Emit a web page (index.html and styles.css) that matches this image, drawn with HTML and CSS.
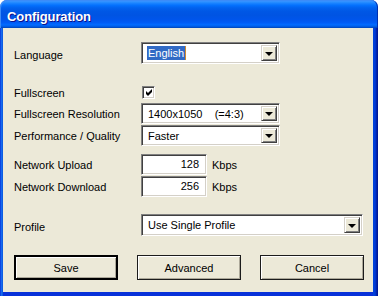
FILE: index.html
```html
<!DOCTYPE html>
<html>
<head>
<meta charset="utf-8">
<link rel="stylesheet" href="styles.css">
</head>
<body>
<div class="window">
  <div class="titlebar"><span class="title">Configuration</span></div>
  <div class="client">
    <div class="row r-lang">
      <span class="label">Language</span>
      <div class="combo w139"><span class="val"><span class="sel">English</span><span class="caret"></span></span><span class="drop"><i></i></span></div>
    </div>
    <div class="row r-full">
      <span class="label">Fullscreen</span>
      <span class="check"><svg width="7" height="7" viewBox="0 0 7 7"><path d="M0 2 L2 4 L6 0 L6 3 L2 7 L0 5 Z" fill="#000"/></svg></span>
    </div>
    <div class="row r-res">
      <span class="label">Fullscreen Resolution</span>
      <div class="combo w139"><span class="val">1400x1050    (=4:3)</span><span class="drop"><i></i></span></div>
    </div>
    <div class="row r-perf">
      <span class="label">Performance / Quality</span>
      <div class="combo w139"><span class="val">Faster</span><span class="drop"><i></i></span></div>
    </div>
    <div class="row r-up">
      <span class="label">Network Upload</span>
      <span class="num">128</span><span class="unit">Kbps</span>
    </div>
    <div class="row r-down">
      <span class="label">Network Download</span>
      <span class="num">256</span><span class="unit">Kbps</span>
    </div>
    <div class="row r-prof">
      <span class="label">Profile</span>
      <div class="combo w222"><span class="val">Use Single Profile</span><span class="drop"><i></i></span></div>
    </div>
    <div class="buttons">
      <span class="btn default">Save</span>
      <span class="btn">Advanced</span>
      <span class="btn">Cancel</span>
    </div>
  </div>
</div>
</body>
</html>
```
FILE: styles.css
```css
html, body { margin: 0; padding: 0; background: #fff; }
.window {
  width: 378px; height: 296px; box-sizing: border-box;
  display: flex; flex-direction: column;
  font-family: "Liberation Sans", Arial, sans-serif; font-size: 11px; color: #000;
}
.titlebar {
  height: 28px; flex: none; box-sizing: border-box;
  border-radius: 7px 7px 0 0;
  background: linear-gradient(#0058EE 0%, #3A93FF 4%, #288EFF 8%, #127DFF 14%, #036FFC 20%, #0262EE 28%, #0057E5 40%, #0054E3 55%, #0055EB 70%, #005BF5 80%, #026AFE 88%, #0062EF 93%, #0052D6 97%, #0040AB 100%);
  box-shadow: inset 1px 1px #3C8CF8, inset -1px 0 #0030B0;
  display: flex; align-items: center; padding: 4px 0 0 7px;
}
.title {
  color: #fff; font-weight: bold; font-size: 13px; letter-spacing: -0.1px;
  text-shadow: 1px 1px #0F1089;
}
.client {
  flex: 1; background: #ECE9D8;
  border-left: 3px solid #0842D6;
  border-right: 5px solid #0831D9;
  border-bottom: 4px solid #0831D9;
  padding: 14px 9px 0 11px;
  position: relative;
}
.client::before {
  content: ""; position: absolute; left: -3px; top: 0; bottom: -4px; width: 3px;
  background: linear-gradient(90deg, #0831D9, #166AEE 50%, #0855DD);
}
.client::after {
  content: ""; position: absolute; right: -5px; top: 0; bottom: -4px; width: 5px;
  background: linear-gradient(90deg, #0044D8, #003BDA 40%, #001EA0 80%, #00138C);
}
.row { display: flex; align-items: center; }
.label { width: 127px; flex: none; white-space: nowrap; }
.r-lang { height: 22px; }
.r-lang .label { padding-top: 3px; }
.r-full { height: 17px; margin-top: 20px; }
.r-res { height: 21px; margin-top: 2px; }
.r-perf { height: 21px; margin-top: 1px; }
.r-up { height: 21px; margin-top: 8px; }
.r-down { height: 21px; margin-top: 1px; }
.r-prof { height: 22px; margin-top: 17px; }
.r-prof .label { padding-top: 4px; }

.combo, .num, .check {
  box-sizing: border-box; background: #fff;
  border: 1px solid; border-color: #808080 #fff #fff #808080;
  box-shadow: inset 1px 1px #404040, inset -1px -1px #D4D0C8;
}
.combo { height: 100%; display: flex; align-items: center; padding: 2px; }
.w139 { width: 139px; }
.w222 { width: 222px; }
.val { flex: 1; padding-left: 4px; white-space: pre; display: flex; align-items: center; }
.sel { background: #316AC5; color: #fff; padding: 1px; margin-left: -1px; line-height: 12px; }
.caret { width: 1px; height: 14px; background: #D08A30; }
.drop {
  width: 16px; height: 100%; box-sizing: border-box; background: #ECE9D8;
  border: 1px solid; border-color: #D4D0C8 #404040 #404040 #D4D0C8;
  box-shadow: inset 1px 1px #fff, inset -1px -1px #808080;
  display: flex; align-items: center; justify-content: center;
}
.drop i {
  width: 0; height: 0; border-left: 4px solid transparent; border-right: 4px solid transparent;
  border-top: 4px solid #000; margin-top: 1px;
}
.check { width: 13px; height: 13px; margin-left: 1px; display: flex; align-items: center; justify-content: center; }
.check svg { display: block; margin-left: 1px; }
.num { width: 66px; height: 100%; text-align: right; padding-right: 7px; line-height: 19px; }
.unit { margin-left: 5px; }

.buttons { display: flex; justify-content: space-between; margin-top: 19px; width: 350px; }
.btn {
  width: 104px; height: 25px; box-sizing: border-box; background: #ECE9D8;
  border: 1px solid #1C1C1C;
  box-shadow: inset 1px 1px #fff, inset -1px -1px #ACA899;
  display: flex; align-items: center; justify-content: center;
}
.btn.default { border: 2px solid #000; }
```
